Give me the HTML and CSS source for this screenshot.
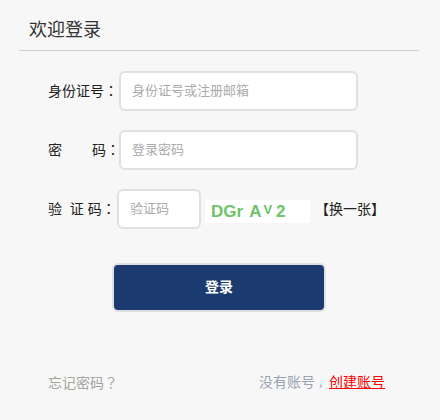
FILE: index.html
```html
<!DOCTYPE html>
<html lang="zh-CN">
<head>
<meta charset="utf-8">
<title>欢迎登录</title>
<link rel="stylesheet" href="styles.css">
</head>
<body>
<main class="panel">
  <h1 class="title">欢迎登录</h1>
  <form class="form">
    <div class="row">
      <label class="label">身份证号<span class="punct" lang="zh-TW">：</span></label>
      <input class="field" type="text" placeholder="身份证号或注册邮箱">
    </div>
    <div class="row">
      <label class="label"><span class="gap">密</span>码<span class="punct" lang="zh-TW">：</span></label>
      <input class="field" type="text" placeholder="登录密码">
    </div>
    <div class="row">
      <label class="label label-code">验&nbsp;&nbsp;证 码<span class="punct" lang="zh-TW">：</span></label>
      <input class="field field-code" type="text" placeholder="验证码">
      <div class="captcha"><span class="c1">DGr</span><span class="c2">A</span><span class="c3">V</span><span class="c4">2</span></div>
      <a class="swap">【换一张】</a>
    </div>
    <div class="actions"><button class="submit" type="button">登录</button></div>
  </form>
  <footer class="foot">
    <a class="forgot">忘记密码<span class="punct" lang="zh-TW">？</span></a>
    <span class="noacc">没有账号<span class="comma">，</span><a class="create">创建账号</a></span>
  </footer>
</main>
</body>
</html>
```
FILE: styles.css
```css
* { box-sizing: border-box; }
html, body { margin: 0; padding: 0; }
body {
  width: 440px;
  height: 420px;
  background: #f7f7f7;
  font-family: "Liberation Sans", "Noto Sans CJK SC", sans-serif;
  font-size: 14px;
  color: #222;
  overflow: hidden;
}
.punct { font-family: "Noto Sans CJK TC", "Noto Sans CJK SC", sans-serif; }
.comma { padding-left: 3px; font-size: 11px; }
.panel { width: 400px; margin-left: 19px; padding-top: 15px; }
.title {
  margin: 0;
  height: 36px;
  padding-left: 10px;
  border-bottom: 1px solid #d0d0d0;
  font-size: 18px;
  font-weight: 400;
  line-height: 30px;
  color: #333;
}
.form { padding-top: 20px; }
.row { display: flex; align-items: center; height: 40px; margin-bottom: 19px; padding-left: 29px; }
.label { width: 71px; flex: none; white-space: nowrap; padding-bottom: 2px; }
.gap { display: inline-block; width: 44px; }
.label-code { width: 69px; }
.field {
  width: 239px;
  height: 40px;
  flex: none;
  padding: 0 10px 2px 11px;
  border: 2px solid #e0e0e0;
  border-radius: 6px;
  background: #fff;
  font-family: inherit;
  font-size: 13px;
  outline: none;
}
.field::placeholder { color: #aaa; opacity: 1; }
.field-code { width: 84px; }
.captcha {
  width: 105px;
  height: 23px;
  margin: 5px 0 0 4px;
  padding-left: 6px;
  flex: none;
  background: #fff;
  color: #6cc36a;
  font-weight: 700;
  font-size: 17px;
  line-height: 24px;
  white-space: nowrap;
  overflow: hidden;
}
.c2 { margin-left: 6px; }
.c3 { font-size: 13px; position: relative; top: -3px; margin-left: 2px; }
.c4 { margin-left: 4px; }
.swap { margin-left: 5px; white-space: nowrap; color: #222; padding-bottom: 2px; }
.actions { padding: 15px 0 0 93px; }
.submit {
  display: block;
  width: 214px;
  height: 49px;
  padding: 0 0 3px;
  border: 2px solid #e0e0e0;
  border-radius: 6px;
  background: #1b3a6f;
  color: #fff;
  font-family: inherit;
  font-size: 14px;
  font-weight: 700;
}
.foot {
  display: flex;
  justify-content: space-between;
  margin-top: 60px;
  padding: 0 34px 0 29px;
  line-height: 20px;
}
.forgot { color: #a5a5a0; }
.noacc { color: #9aa3b0; }
.create { color: #f00; text-decoration: underline; }
```
